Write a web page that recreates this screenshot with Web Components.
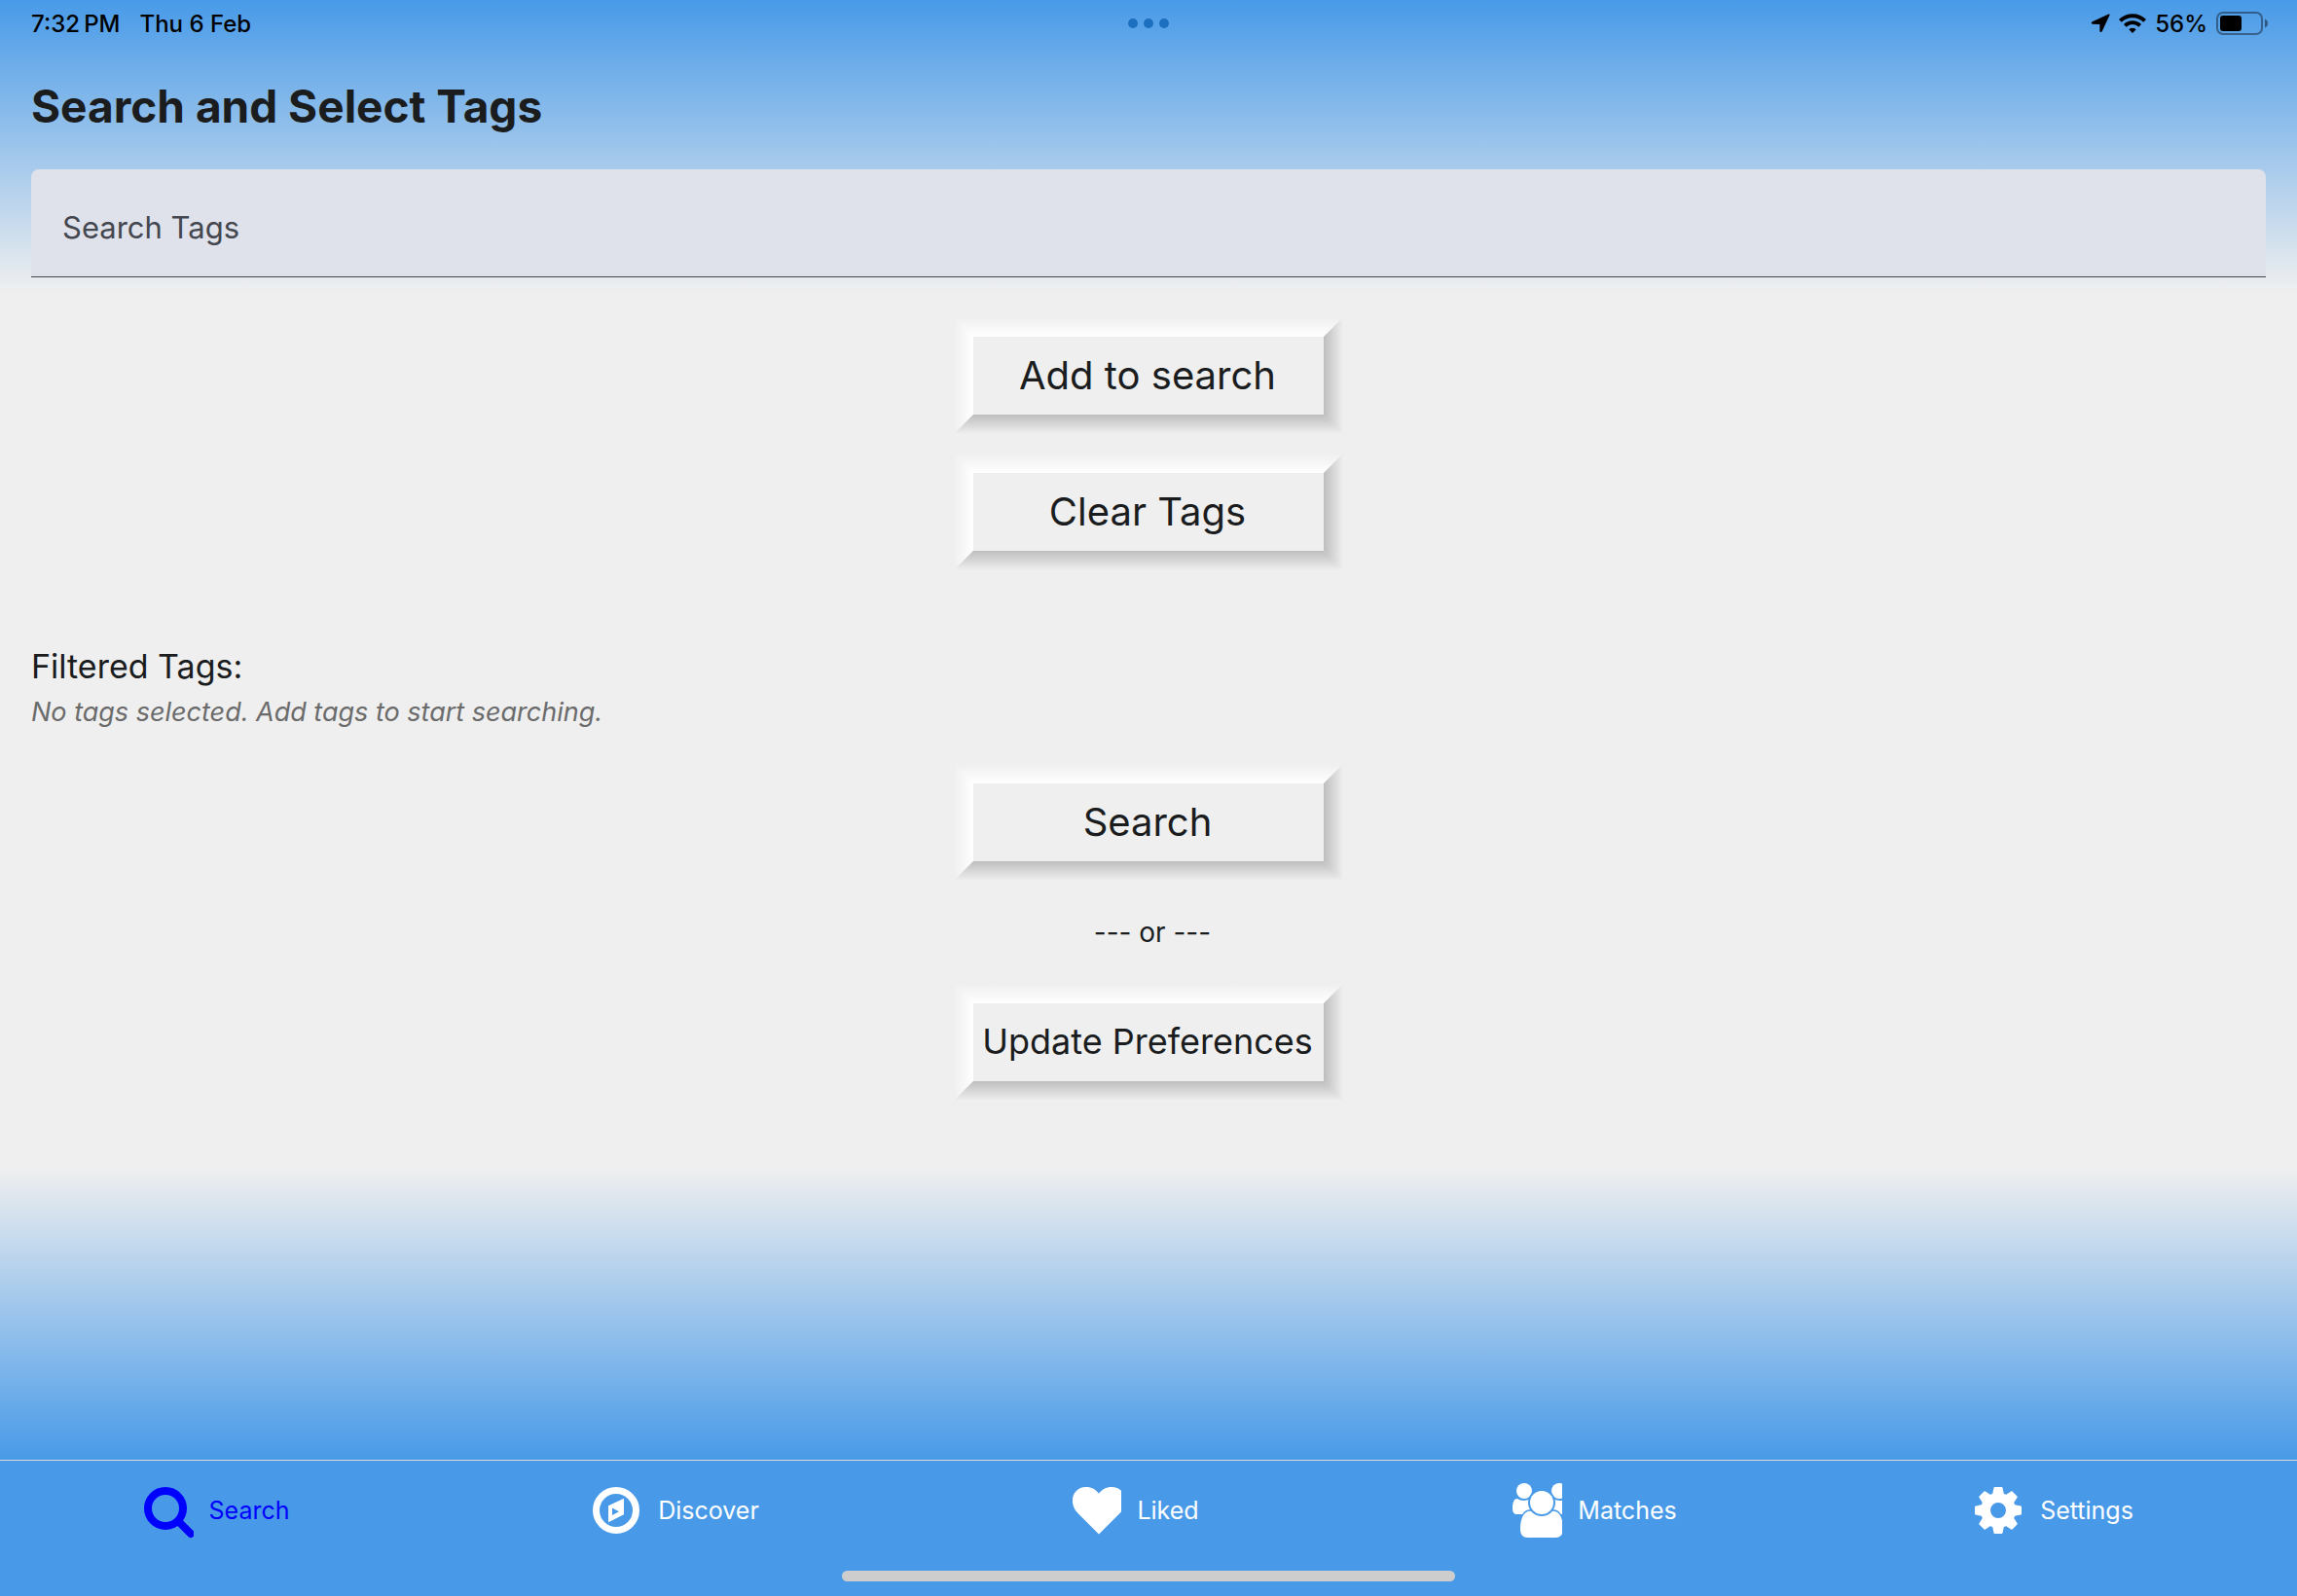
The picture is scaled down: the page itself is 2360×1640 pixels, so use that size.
<!DOCTYPE html>
<html lang="en">
<head>
<meta charset="utf-8">
<meta name="viewport" content="width=device-width, initial-scale=1">
<title>Search and Select Tags</title>
<style>
  body {
    margin: 0;
    font-family: Inter, "Liberation Sans", sans-serif;
    color: #1a1c1e;
  }
</style>
</head>
<body>
<tags-app></tags-app>

<script>
class StatusBar extends HTMLElement {
  constructor() {
    super();
    this.attachShadow({mode: 'open'});
    this.shadowRoot.innerHTML = `
      <style>
        :host {
          display: grid;
          grid-template-columns: 1fr auto 1fr;
          align-items: center;
          height: 48px;
          padding: 0 30px;
          font-size: 24px;
          font-weight: 500;
          color: #000;
        }
        .left { display: flex; gap: 20px; padding-left: 2px; }
        .dots { display: flex; gap: 6px; }
        .dots i {
          width: 10px;
          height: 10px;
          border-radius: 50%;
          background: #1c6fbf;
        }
        .right {
          display: flex;
          align-items: center;
          justify-content: flex-end;
          gap: 9px;
        }
        svg { display: block; }
      </style>
      <div class="left"><span>7:32&#8239;PM</span><span>Thu 6 Feb</span></div>
      <div class="dots"><i></i><i></i><i></i></div>
      <div class="right">
        <svg width="20" height="20" viewBox="0 0 20 20">
          <path d="M18.4 .6 C19.2 .3 19.8 .9 19.4 1.7 L11.7 18.3 C11.2 19.5 9.4 19.3 9.4 18 L9.3 10.9 L2 10.7 C.5 10.700 .3 8.900 1.700 8.300 Z"/>
        </svg>
        <svg width="28" height="20" viewBox="0 0 28 20" fill="none" stroke="#000" stroke-width="4">
          <path d="M1.4 7.4 A17.8 17.8 0 0 1 26.6 7.4"/>
          <path d="M6.3 12.3 A11 11 0 0 1 21.7 12.3" stroke-width="3.8"/>
          <path d="M14 20 L10.3 16.2 A5.4 5.4 0 0 1 17.7 16.2 Z" fill="#000" stroke="none"/>
        </svg>
        <span>56%</span>
        <svg width="53" height="24" viewBox="0 0 53 24">
          <rect x="1" y="1" width="46" height="22" rx="6" fill="none" stroke="#000" stroke-opacity=".4" stroke-width="2"/>
          <rect x="4" y="4" width="22" height="16" rx="3"/>
          <path d="M50 7.500 C54 9 54 15 50 16.500 Z" fill-opacity=".45"/>
        </svg>
      </div>
    `;
  }
}
customElements.define('status-bar', StatusBar);

class TagField extends HTMLElement {
  constructor() {
    super();
    this.attachShadow({mode: 'open'});
    this.shadowRoot.innerHTML = `
      <style>
        :host { display: block; }
        input {
          display: block;
          box-sizing: border-box;
          width: 100%;
          height: 111px;
          padding: 8px 32px 0;
          border: 0;
          border-bottom: 1px solid #44474f;
          border-radius: 8px 8px 0 0;
          background: #dfe2eb;
          font: inherit;
          font-size: 31px;
          color: #1a1c1e;
          outline: none;
        }
        input::placeholder { color: #44474f; opacity: 1; }
      </style>
      <input type="text">
    `;
  }

  connectedCallback() {
    const input = this.shadowRoot.querySelector('input');
    input.placeholder = this.getAttribute('label');
    input.setAttribute('aria-label', this.getAttribute('label'));
  }
}
customElements.define('tag-field', TagField);

// Raised button: a flat face with four mitred, shaded edges around it
class BevelButton extends HTMLElement {
  constructor() {
    super();
    this.attachShadow({mode: 'open'});
    this.shadowRoot.innerHTML = `
      <style>
        :host { display: block; width: 400px; font-size: 40px; }
        :host([compact]) { font-size: 36px; }
        button {
          display: grid;
          width: 100%;
          height: 120px;
          padding: 0;
          border: 0;
          background: none;
          font: inherit;
          color: inherit;
          white-space: nowrap;
          cursor: pointer;
        }
        button > span { grid-area: 1 / 1; }
        .top {
          background: linear-gradient(to bottom, #efefef, #fff 20px);
          clip-path: polygon(0 0, 100% 0, calc(100% - 20px) 20px, 20px 20px);
        }
        .left {
          background: linear-gradient(to right, #efefef, #fff 20px);
          clip-path: polygon(0 0, 20px 20px, 20px calc(100% - 20px), 0 100%);
        }
        .bottom {
          background: linear-gradient(to top, #efefef, #bebebe 20px);
          clip-path: polygon(0 100%, 20px calc(100% - 20px), calc(100% - 20px) calc(100% - 20px), 100% 100%);
        }
        .right {
          background: linear-gradient(to left, #efefef, #bebebe 20px);
          clip-path: polygon(100% 0, 100% 100%, calc(100% - 20px) calc(100% - 20px), calc(100% - 20px) 20px);
        }
        .face {
          display: flex;
          align-items: center;
          justify-content: center;
          margin: 20px;
          padding: 0 2px 2px 0;
          background: #efefef;
        }
      </style>
      <button type="button">
        <span class="top"></span>
        <span class="left"></span>
        <span class="bottom"></span>
        <span class="right"></span>
        <span class="face"><slot></slot></span>
      </button>
    `;
  }
}
customElements.define('bevel-button', BevelButton);

class TabItem extends HTMLElement {
  constructor() {
    super();
    this.attachShadow({mode: 'open'});
    this.shadowRoot.innerHTML = `
      <style>
        :host { display: block; flex: 1; color: #fff; }
        :host([active]) { color: #00f; }
        a {
          display: flex;
          align-items: center;
          justify-content: center;
          gap: 16px;
          height: 102px;
          padding-right: 27px;
          font-size: 25px;
          color: inherit;
          text-decoration: none;
        }
        ::slotted(svg) {
          display: block;
          width: 51px;
          height: 60px;
          overflow: hidden;
          fill: currentColor;
        }
      </style>
      <a href="#"><slot name="icon"></slot><slot></slot></a>
    `;
  }
}
customElements.define('tab-item', TabItem);

class TabBar extends HTMLElement {
  constructor() {
    super();
    this.attachShadow({mode: 'open'});
    this.shadowRoot.innerHTML = `
      <style>
        :host {
          display: block;
          --bar: #489ae8;
          background: var(--bar);
          border-top: 1px solid #d8d8d8;
        }
        nav { display: flex; }
        .home {
          width: 630px;
          height: 11px;
          margin: 11px auto 15px;
          border-radius: 6px;
          background: #cdcdcd;
        }
      </style>
      <nav><slot></slot></nav>
      <div class="home"></div>
    `;
  }
}
customElements.define('tab-bar', TabBar);

class TagsApp extends HTMLElement {
  constructor() {
    super();
    this.attachShadow({mode: 'open'});
    this.shadowRoot.innerHTML = `
      <style>
        :host {
          display: flex;
          flex-direction: column;
          min-height: 100vh;
        }
        .screen {
          flex: 1;
          background: linear-gradient(#489ae8 0%, #efefef 20%, #efefef 80%, #489ae8 100%);
        }
        main {
          display: flex;
          flex-direction: column;
          padding: 32px 32px 0;
        }
        h1 {
          margin: 0 0 36px;
          font-size: 46px;
          line-height: 58px;
          font-weight: 700;
        }
        .actions {
          display: flex;
          flex-direction: column;
          align-items: center;
          gap: 20px;
          margin-top: 41px;
        }
        h2 {
          margin: 77px 0 8px;
          font-size: 34px;
          line-height: 44px;
          font-weight: 400;
        }
        p {
          margin: 0;
          font-size: 28px;
          line-height: 34px;
        }
        .empty {
          font-size: 27px;
          font-style: italic;
          color: #6b6b6b;
        }
        .submit {
          display: flex;
          flex-direction: column;
          align-items: center;
          gap: 36px;
          margin-top: 36px;
        }
      </style>
      <div class="screen">
        <status-bar></status-bar>
        <main>
          <h1>Search and Select Tags</h1>
          <tag-field label="Search Tags"></tag-field>
          <div class="actions">
            <bevel-button>Add to search</bevel-button>
            <bevel-button>Clear Tags</bevel-button>
          </div>
          <h2>Filtered Tags:</h2>
          <p class="empty">No tags selected. Add tags to start searching.</p>
          <div class="submit">
            <bevel-button>Search</bevel-button>
            <p>&nbsp;--- or ---</p>
            <bevel-button compact>Update Preferences</bevel-button>
          </div>
        </main>
      </div>
      <tab-bar>
        <tab-item active>
          <svg slot="icon" viewBox="0 0 51 60">
            <circle cx="22" cy="28" r="18" fill="none" stroke="currentColor" stroke-width="8"/>
            <path d="M35 41 L48 54" stroke="currentColor" stroke-width="8" stroke-linecap="round"/>
          </svg>Search</tab-item>
        <tab-item>
          <svg slot="icon" viewBox="0 0 51 60">
            <circle cx="24" cy="30" r="20.5" fill="none" stroke="currentColor" stroke-width="7"/>
            <path fill-rule="evenodd" d="M32 17.700 V34.300 L16 42.300 V25.300 Z M20 27.500 V35 L27 31.300 Z"/>
          </svg>Discover</tab-item>
        <tab-item>
          <svg slot="icon" viewBox="0 0 51 60">
            <path d="M28 54.500 L6.500 33 C-4 22 1 6 15 6 C20.500 6 25 8.500 28 12.700 C31 8.500 35.500 6 41 6 C55 6 60 22 49.500 33 Z"/>
          </svg>Liked</tab-item>
        <tab-item>
          <svg slot="icon" viewBox="0 0 51 60">
            <circle cx="12" cy="10" r="8"/>
            <circle cx="48" cy="10" r="8"/>
            <path d="M5 18 C8 20.500 14 20.500 18 18.500 V34 H5 C1.500 34 0 32 0 28 C0 23 1 18 5 18 Z"/>
            <path d="M55 18 C52 20.500 46 20.500 42 18.500 V34 H55 Z"/>
            <path d="M20 31 C24 36 36 36 40 31 C48 29.500 52 38 52 49 C52 55 49.500 58 44 58 H16 C10.500 58 8 55 8 49 C8 38 12 29.500 20 31 Z" stroke="#489ae8" stroke-width="3" paint-order="stroke"/>
            <circle cx="30" cy="22" r="14" fill="#489ae8"/>
            <circle cx="30" cy="22" r="12"/>
          </svg>Matches</tab-item>
        <tab-item>
          <svg slot="icon" viewBox="0 0 51 60">
            <defs><path id="tooth" d="M-6 -16 L-4.500 -23.200 Q-4.300 -24 -3.500 -24 H3.500 Q4.300 -24 4.500 -23.200 L6 -16 Z"/></defs>
            <g transform="translate(24 30)">
              <circle r="13" fill="none" stroke="currentColor" stroke-width="10"/>
              <use href="#tooth"/>
              <use href="#tooth" transform="rotate(45)"/>
              <use href="#tooth" transform="rotate(90)"/>
              <use href="#tooth" transform="rotate(135)"/>
              <use href="#tooth" transform="rotate(180)"/>
              <use href="#tooth" transform="rotate(225)"/>
              <use href="#tooth" transform="rotate(270)"/>
              <use href="#tooth" transform="rotate(315)"/>
            </g>
          </svg>Settings</tab-item>
      </tab-bar>
    `;
  }
}
customElements.define('tags-app', TagsApp);
</script>
</body>
</html>
